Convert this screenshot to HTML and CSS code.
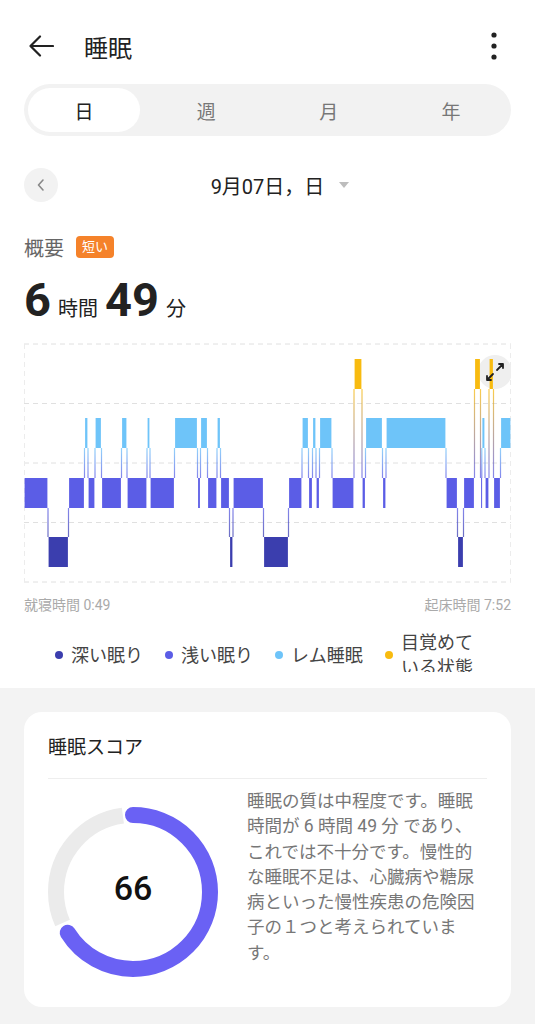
FILE: index.html
```html
<!DOCTYPE html>
<html lang="ja">
<head>
  <meta charset="UTF-8" />
  <meta name="viewport" content="width=device-width, initial-scale=1.0"/>
  <title>睡眠</title>
  <link rel="stylesheet" href="styles.css">
</head>
<body>

<header class="topbar">
  <svg class="back" viewBox="0 0 26 26" width="26" height="26">
    <path d="M25 13H2.5M12 3.5L2.5 13l9.5 9.5" fill="none" stroke="#222" stroke-width="2.2" stroke-linecap="round" stroke-linejoin="round"/>
  </svg>
  <h1>睡眠</h1>
  <svg class="more" viewBox="0 0 10 28" width="10" height="28">
    <circle cx="5" cy="3" r="2.6" fill="#222"/>
    <circle cx="5" cy="14" r="2.6" fill="#222"/>
    <circle cx="5" cy="25" r="2.6" fill="#222"/>
  </svg>
</header>

<nav class="tabs">
  <button class="tab active">日</button>
  <button class="tab">週</button>
  <button class="tab">月</button>
  <button class="tab">年</button>
</nav>

<div class="date-row">
  <div>
    <button class="prev">
      <svg viewBox="0 0 10 14" width="10" height="14">
        <path d="M7 2L2.5 7L7 12" fill="none" stroke="#888" stroke-width="1.6" stroke-linecap="round" stroke-linejoin="round"/>
      </svg>
    </button>
  </div>
  <div class="date">9月07日，日</div>
  <div><span class="caret"></span></div>
</div>

<section class="overview">
  <div class="overview-head">
    <span class="label">概要</span>
    <span class="badge">短い</span>
  </div>

  <div class="duration">
    <b>6</b><span>時間</span><b>49</b><span>分</span>
  </div>

  <div class="chart">
    <svg id="chart" viewBox="0 0 487 242" width="487" height="242"></svg>
    <button class="expand">
      <svg viewBox="0 0 34 34" width="34" height="34">
        <path d="M19 15L25 9M21 9H25V13M15 19L9 25M9 21V25H13" fill="none" stroke="#222" stroke-width="1.8" stroke-linecap="round" stroke-linejoin="round"/>
      </svg>
    </button>
  </div>

  <div class="times">
    <span>就寝時間 0:49</span>
    <span>起床時間 7:52</span>
  </div>

  <div class="legend">
    <div class="legend-item"><i class="dot deep"></i><span>深い眠り</span></div>
    <div class="legend-item"><i class="dot light"></i><span>浅い眠り</span></div>
    <div class="legend-item"><i class="dot rem"></i><span>レム睡眠</span></div>
    <div class="legend-item"><i class="dot awake"></i><span class="wrap">目覚めている状態</span></div>
  </div>
</section>

<div class="score-area">
  <div class="card">
    <h2 class="card-title">睡眠スコア</h2>
    <div class="score-body">
      <div class="ring">
        <svg viewBox="0 0 170 170" width="170" height="170">
          <circle class="ring-bg" cx="85" cy="85" r="77" transform="rotate(-90 85 85)"/>
          <circle class="ring-fg" cx="85" cy="85" r="77" transform="rotate(-90 85 85)"/>
        </svg>
        <span class="score">66</span>
      </div>
      <p class="score-text">睡眠の質は中程度です。睡眠時間が 6 時間 49 分 であり、これでは不十分です。慢性的な睡眠不足は、心臓病や糖尿病といった慢性疾患の危険因子の１つと考えられています。</p>
    </div>
  </div>
</div>

<script>
  // D = 深い眠り, L = 浅い眠り, R = レム睡眠, A = 目覚めている状態
  const bandas = {
    A: { top: 17, color: '#f8bb10' },
    R: { top: 76, color: '#6ec4f9' },
    L: { top: 136, color: '#5b5de6' },
    D: { top: 195, color: '#3b3eae' }
  };
  const ALTO = 30;
  const X0 = 24;

  const tramos = [
    ['L', 24, 48], ['D', 48, 68.5], ['L', 68.5, 84.5], ['R', 84.5, 88],
    ['L', 88, 95], ['R', 95, 101.5], ['L', 101.5, 121.5], ['R', 121.5, 127],
    ['L', 127, 147], ['R', 147, 150], ['L', 150, 174.5], ['R', 174.5, 197.5],
    ['L', 197.5, 200.5], ['R', 200.5, 207.5], ['L', 207.5, 217], ['R', 217, 220.5],
    ['L', 220.5, 229.5], ['D', 229.5, 233], ['L', 233, 263.5], ['D', 263.5, 288.5],
    ['L', 288.5, 302], ['R', 302, 308.5], ['L', 308.5, 312.5], ['R', 312.5, 316],
    ['L', 316, 319.5], ['R', 319.5, 332], ['L', 332, 354], ['A', 354, 362],
    ['L', 362, 365.5], ['R', 365.5, 382.5], ['L', 382.5, 386], ['R', 386, 446],
    ['L', 446, 457.5], ['D', 457.5, 463.5], ['L', 463.5, 474.5], ['A', 474.5, 480.5],
    ['L', 480.5, 481.8], ['R', 481.8, 485], ['L', 485, 489], ['A', 489, 493.5],
    ['L', 493.5, 500.5], ['R', 500.5, 511]
  ];

  function dibujarGrafico() {
    const svg = document.getElementById('chart');
    let defs = '';
    let html = '';

    [2, 61.5, 121, 180.5, 240].forEach(y => {
      html += `<line class="grid" x1="0" x2="487" y1="${y}" y2="${y}"/>`;
    });
    html += `<line class="grid-v" x1="0.5" x2="0.5" y1="2" y2="240"/>`;
    html += `<line class="grid-v" x1="486.5" x2="486.5" y1="2" y2="240"/>`;
    // fondo del botón de ampliar, queda detrás de las barras
    html += `<circle cx="471" cy="30" r="17" fill="#efefef"/>`;

    tramos.forEach((t, i) => {
      const b = bandas[t[0]];
      const x = t[1] - X0 + 0.6;
      const w = Math.max(t[2] - t[1] - 1.2, 1);
      html += `<rect x="${x}" y="${b.top}" width="${w}" height="${ALTO}" fill="${b.color}"/>`;

      const sig = tramos[i + 1];
      if (!sig) return;
      const nb = bandas[sig[0]];
      const arriba = b.top < nb.top ? b : nb;
      const abajo = arriba === b ? nb : b;
      const id = 'g' + i;
      defs += `<linearGradient id="${id}" x1="0" y1="0" x2="0" y2="1">
        <stop offset="0" stop-color="${arriba.color}"/><stop offset="1" stop-color="${abajo.color}"/></linearGradient>`;
      html += `<rect x="${t[2] - X0 - 0.6}" y="${arriba.top + ALTO}" width="1.2" height="${abajo.top - arriba.top - ALTO}" fill="url(#${id})" opacity="0.75"/>`;
    });

    svg.innerHTML = `<defs>${defs}</defs>` + html;
  }

  dibujarGrafico();
</script>

</body>
</html>
```

FILE: styles.css
```css
* {
  box-sizing: border-box;
}

body {
  font-family: Roboto, "Noto Sans CJK JP", sans-serif;
  margin: 0;
  padding: 0;
  background: white;
  color: #222;
}

button {
  font-family: inherit;
  cursor: pointer;
}

.topbar {
  display: flex;
  align-items: center;
  height: 56px;
  margin-top: 18px;
  padding: 0 36px 0 28px;
}

.topbar .back {
  display: block;
}

.topbar h1 {
  margin: 0 0 0 30px;
  font-size: 24px;
  font-weight: 400;
}

.topbar .more {
  display: block;
  margin-left: auto;
}

.tabs {
  display: flex;
  justify-content: space-between;
  height: 52px;
  margin: 10px 24px 0;
  padding: 4px;
  background: #f2f2f2;
  border-radius: 26px;
}

.tab {
  width: 112px;
  border: none;
  background: transparent;
  border-radius: 22px;
  font-size: 19px;
  color: #777;
}

.tab.active {
  background: white;
  color: #222;
}

.date-row {
  display: grid;
  grid-template-columns: 1fr auto 1fr;
  align-items: center;
  height: 34px;
  margin: 32px 24px 0;
}

.prev {
  display: flex;
  align-items: center;
  justify-content: center;
  width: 34px;
  height: 34px;
  padding: 0;
  border: none;
  border-radius: 50%;
  background: #f2f2f2;
}

.date {
  font-size: 20px;
  color: #222;
}

.caret {
  display: block;
  width: 0;
  height: 0;
  margin-left: 15px;
  border-left: 5px solid transparent;
  border-right: 5px solid transparent;
  border-top: 6px solid #bdbdbd;
}

.overview {
  padding: 0 24px 16px;
}

.overview-head {
  display: flex;
  align-items: center;
  height: 24px;
  margin-top: 33px;
}

.overview-head .label {
  font-size: 20px;
  color: #666;
}

.badge {
  margin-left: 12px;
  padding: 0 6px;
  height: 22px;
  line-height: 22px;
  font-size: 13px;
  color: white;
  background: #f5822a;
  border-radius: 4px;
}

.duration {
  display: flex;
  align-items: baseline;
  height: 56px;
  margin-top: 13px;
  color: #222;
}

.duration b {
  font-size: 47px;
  line-height: 56px;
  font-weight: 700;
}

.duration span {
  font-size: 20px;
  margin: 0 7px;
}

.chart {
  position: relative;
  height: 242px;
  margin-top: 14px;
}

.chart svg {
  display: block;
}

.grid {
  stroke: #e0e0e0;
  stroke-width: 1;
  stroke-dasharray: 5 4;
}

.grid-v {
  stroke: #ececec;
  stroke-width: 1;
  stroke-dasharray: 5 4;
}

.expand {
  position: absolute;
  top: 13px;
  right: -1px;
  width: 34px;
  height: 34px;
  padding: 0;
  border: none;
  border-radius: 50%;
  background: transparent;
}

.expand svg {
  display: block;
}

.times {
  display: flex;
  justify-content: space-between;
  margin-top: 11px;
  font-size: 14px;
  line-height: 20px;
  color: #aaa;
}

.legend {
  display: grid;
  grid-template-columns: repeat(4, 110px);
  height: 42px;
  margin-top: 15px;
  padding-left: 31px;
  overflow: hidden;
}

.legend-item {
  display: flex;
  align-items: center;
  height: 50px;
  font-size: 18px;
  line-height: 25px;
  color: #444;
}

.dot {
  flex: none;
  width: 8px;
  height: 8px;
  margin-right: 8px;
  border-radius: 50%;
}

.dot.deep { background: #3b3eae; }
.dot.light { background: #5b5de6; }
.dot.rem { background: #6ec4f9; }
.dot.awake { background: #f8bb10; }

.legend-item .wrap {
  max-width: 78px;
}

.score-area {
  background: #f3f3f3;
  padding: 24px 24px 17px;
}

.card {
  background: white;
  border-radius: 18px;
  padding: 0 24px 30px;
}

.card-title {
  margin: 0;
  padding: 24px 0 18px;
  font-size: 19px;
  line-height: 24px;
  font-weight: 400;
  color: #222;
  border-bottom: 1px solid #eeeeee;
}

.score-body {
  display: flex;
  gap: 29px;
  padding-top: 10px;
}

.ring {
  display: grid;
  place-items: center;
  flex: none;
  width: 170px;
  height: 170px;
  margin-top: 18px;
}

.ring svg,
.ring .score {
  grid-area: 1 / 1;
}

.ring-bg {
  fill: none;
  stroke: #ebebeb;
  stroke-width: 16;
  stroke-dasharray: 142.5 341.3;
  stroke-dashoffset: -330.3;
}

.ring-fg {
  fill: none;
  stroke: #6a61f4;
  stroke-width: 16;
  stroke-linecap: round;
  stroke-dasharray: 319.3 483.8;
}

.score {
  margin-bottom: 8px;
  font-size: 34px;
  font-weight: 500;
  color: #111;
}

.score-text {
  margin: 0;
  font-size: 17.5px;
  line-height: 25.3px;
  color: #777;
}
```
